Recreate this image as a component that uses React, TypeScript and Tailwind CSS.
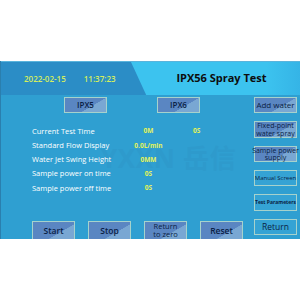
const font = { fontFamily: '"Open Sans", "Noto Sans", "Noto Sans CJK SC", sans-serif' }

function Btn({
  children,
  className = '',
  flat = false,
}: {
  children: React.ReactNode
  className?: string
  flat?: boolean
}) {
  return (
    <div
      className={
        'flex items-center justify-center text-center leading-[1.05] text-[#0b1f45] border border-[#a6d2cc] ' +
        (flat
          ? 'bg-[#35a3d4] '
          : 'bg-[linear-gradient(150deg,#5a86c2_62%,#79a7d3_63%)] ') +
        className
      }
    >
      {children}
    </div>
  )
}

const rows = [
  { label: 'Current Test Time', value: '0M', extra: '0S' },
  { label: 'Standard Flow Display', value: '0.0L/min' },
  { label: 'Water Jet Swing Height', value: '0MM' },
  { label: 'Sample power on time', value: '0S' },
  { label: 'Sample power off time', value: '0S' },
]

export default function App() {
  return (
    <div className="w-[300px] h-[300px] bg-white overflow-hidden" style={font}>
      <div className="h-[61px]" />

      {/* SCREEN */}
      <div className="h-[178px] bg-[#2f9fd1] flex flex-col overflow-hidden border-l border-[#2a7fae]">
        {/* HEADER */}
        <div className="h-[34px] flex bg-[#2b8dc6] border-t border-[#5ab4dc]">
          <div className="w-[130px] flex items-center pl-[23px] gap-[18px] text-[8px] font-semibold text-[#d6ef5c]">
            <span>2022-02-15</span>
            <span>11:37:23</span>
          </div>
          <div className="flex-1 flex items-center justify-center pl-[14px] pr-[2px] bg-[linear-gradient(90deg,#3cc3ef_80%,#35b4e6)] [clip-path:polygon(0_0,100%_0,100%_100%,9%_100%)]">
            <span className="text-[11px] font-bold text-[#0d0d0d]">IPX56 Spray Test</span>
          </div>
        </div>

        {/* BODY */}
        <div className="flex-1 flex relative">
          <div className="absolute left-[100px] top-[44px] text-[26px] font-bold text-[#2e9acc] tracking-wide pointer-events-none">
            YXXN 岳信
          </div>

          <div className="flex-1 flex flex-col relative">
            <div className="flex pt-[2px] h-[18px]">
              <Btn className="ml-[63px] w-[43px] h-[16px] text-[8px] font-semibold">IPX5</Btn>
              <Btn className="ml-[50px] w-[43px] h-[16px] text-[8px] font-semibold">IPX6</Btn>
            </div>

            <div className="flex flex-col pl-[31px] pt-[11px] gap-0">
              {rows.map(r => (
                <div key={r.label} className="flex items-center h-[14.3px]">
                  <span className="w-[101px] text-[7.5px] text-white whitespace-nowrap">{r.label}</span>
                  <span className="w-[31px] text-center text-[6.5px] font-bold text-[#e3f35a]">{r.value}</span>
                  {r.extra && (
                    <span className="ml-[29px] text-[6.5px] font-bold text-[#e3f35a]">{r.extra}</span>
                  )}
                </div>
              ))}
            </div>

            <div className="mt-auto flex pl-[31px] gap-[13px] h-[18px]">
              <Btn className="w-[43px] h-[20px] text-[8.5px] font-semibold">Start</Btn>
              <Btn className="w-[43px] h-[20px] text-[8.5px] font-semibold">Stop</Btn>
              <Btn className="w-[43px] h-[20px] text-[7.5px] leading-[1] !items-start pt-[1px]">
                Return
                <br />
                to zero
              </Btn>
              <Btn className="w-[43px] h-[20px] text-[8.5px] font-semibold">Reset</Btn>
            </div>
          </div>

          <div className="w-[43px] mr-[3px] flex flex-col pt-[2px] gap-[8px]">
            <Btn className="h-[16px] text-[8px] whitespace-nowrap">Add water</Btn>
            <Btn className="h-[17px] text-[7px]">
              Fixed-point
              <br />
              water spray
            </Btn>
            <Btn className="h-[16px] text-[7px] whitespace-nowrap">
              Sample power
              <br />
              supply
            </Btn>
            <Btn flat className="h-[16px] text-[6px] whitespace-nowrap">Manual Screen</Btn>
            <Btn flat className="h-[17px] text-[5px] font-bold whitespace-nowrap">Test Parameters</Btn>
            <Btn flat className="h-[16px] text-[8.5px]">Return</Btn>
          </div>
        </div>
      </div>
    </div>
  )
}
